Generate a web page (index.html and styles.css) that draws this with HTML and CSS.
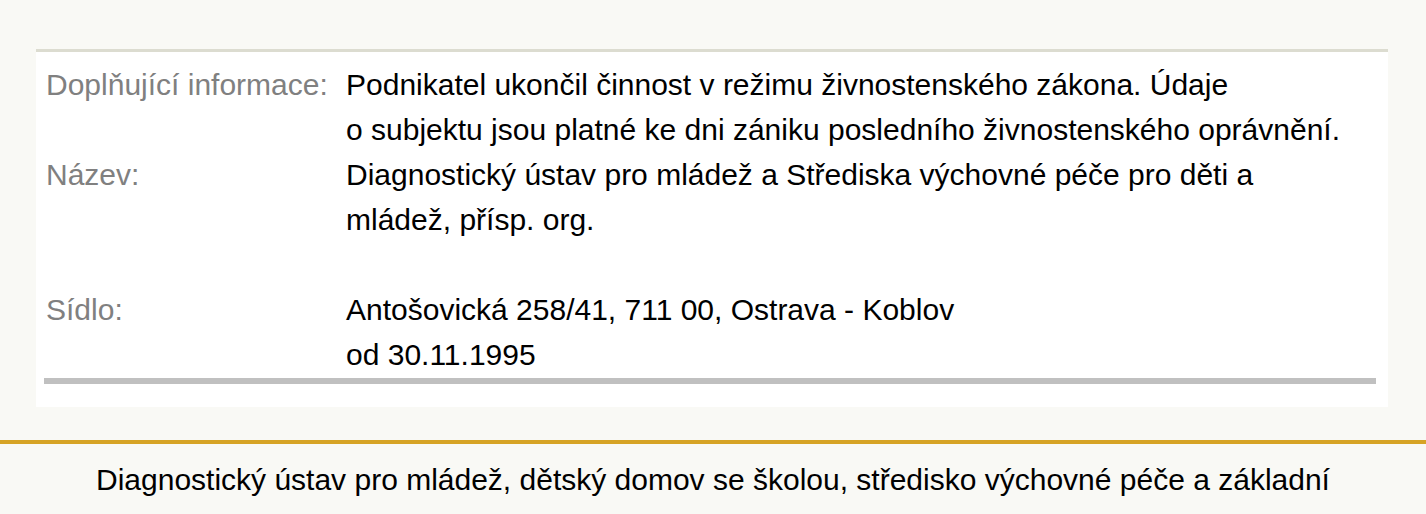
FILE: index.html
```html
<!DOCTYPE html>
<html lang="cs">
<head>
<meta charset="utf-8">
<title>Subjekt</title>
<link rel="stylesheet" href="styles.css">
</head>
<body>
<main class="page">
  <section class="panel">
    <div class="info">
      <div class="label">Doplňující informace:</div>
      <div class="value">Podnikatel ukončil činnost v režimu živnostenského zákona. Údaje o&nbsp;subjektu jsou platné ke dni zániku posledního živnostenského oprávnění.</div>
      <div class="label">Název:</div>
      <div class="value">Diagnostický ústav pro mládež a Střediska výchovné péče pro děti a mládež, přísp. org.</div>
      <div class="spacer"></div>
      <div class="label">Sídlo:</div>
      <div class="value">Antošovická 258/41, 711 00, Ostrava - Koblov<br>od 30.11.1995</div>
    </div>
  </section>
  <footer class="footer">
    <p>Diagnostický ústav pro mládež, dětský domov se školou, středisko výchovné péče a základní</p>
  </footer>
</main>
</body>
</html>
```

FILE: styles.css
```css
html, body {
  margin: 0;
  padding: 0;
  background: #f9f9f5;
  font-family: "Liberation Sans", Arial, sans-serif;
  font-size: 30px;
  line-height: 45px;
  color: #000;
}

.page {
  padding-top: 49px;
}

.panel {
  margin: 0 38px 0 36px;
  background: #fff;
  border-top: 3px solid #dcdcd0;
  padding: 10px 12px 23px 8px;
}

.info {
  display: grid;
  grid-template-columns: 302px 1fr;
  border-bottom: 6px solid #c0c0c0;
  padding-bottom: 1px;
}

.label {
  color: #808080;
  padding-left: 2px;
}

.value {
  padding-right: 24px;
}

.spacer {
  grid-column: 1 / -1;
  height: 45px;
}

.footer {
  margin-top: 33px;
  border-top: 4px solid #d6a325;
  padding-top: 13px;
  text-align: center;
}

.footer p {
  margin: 0;
  padding: 0 60px;
}
```
